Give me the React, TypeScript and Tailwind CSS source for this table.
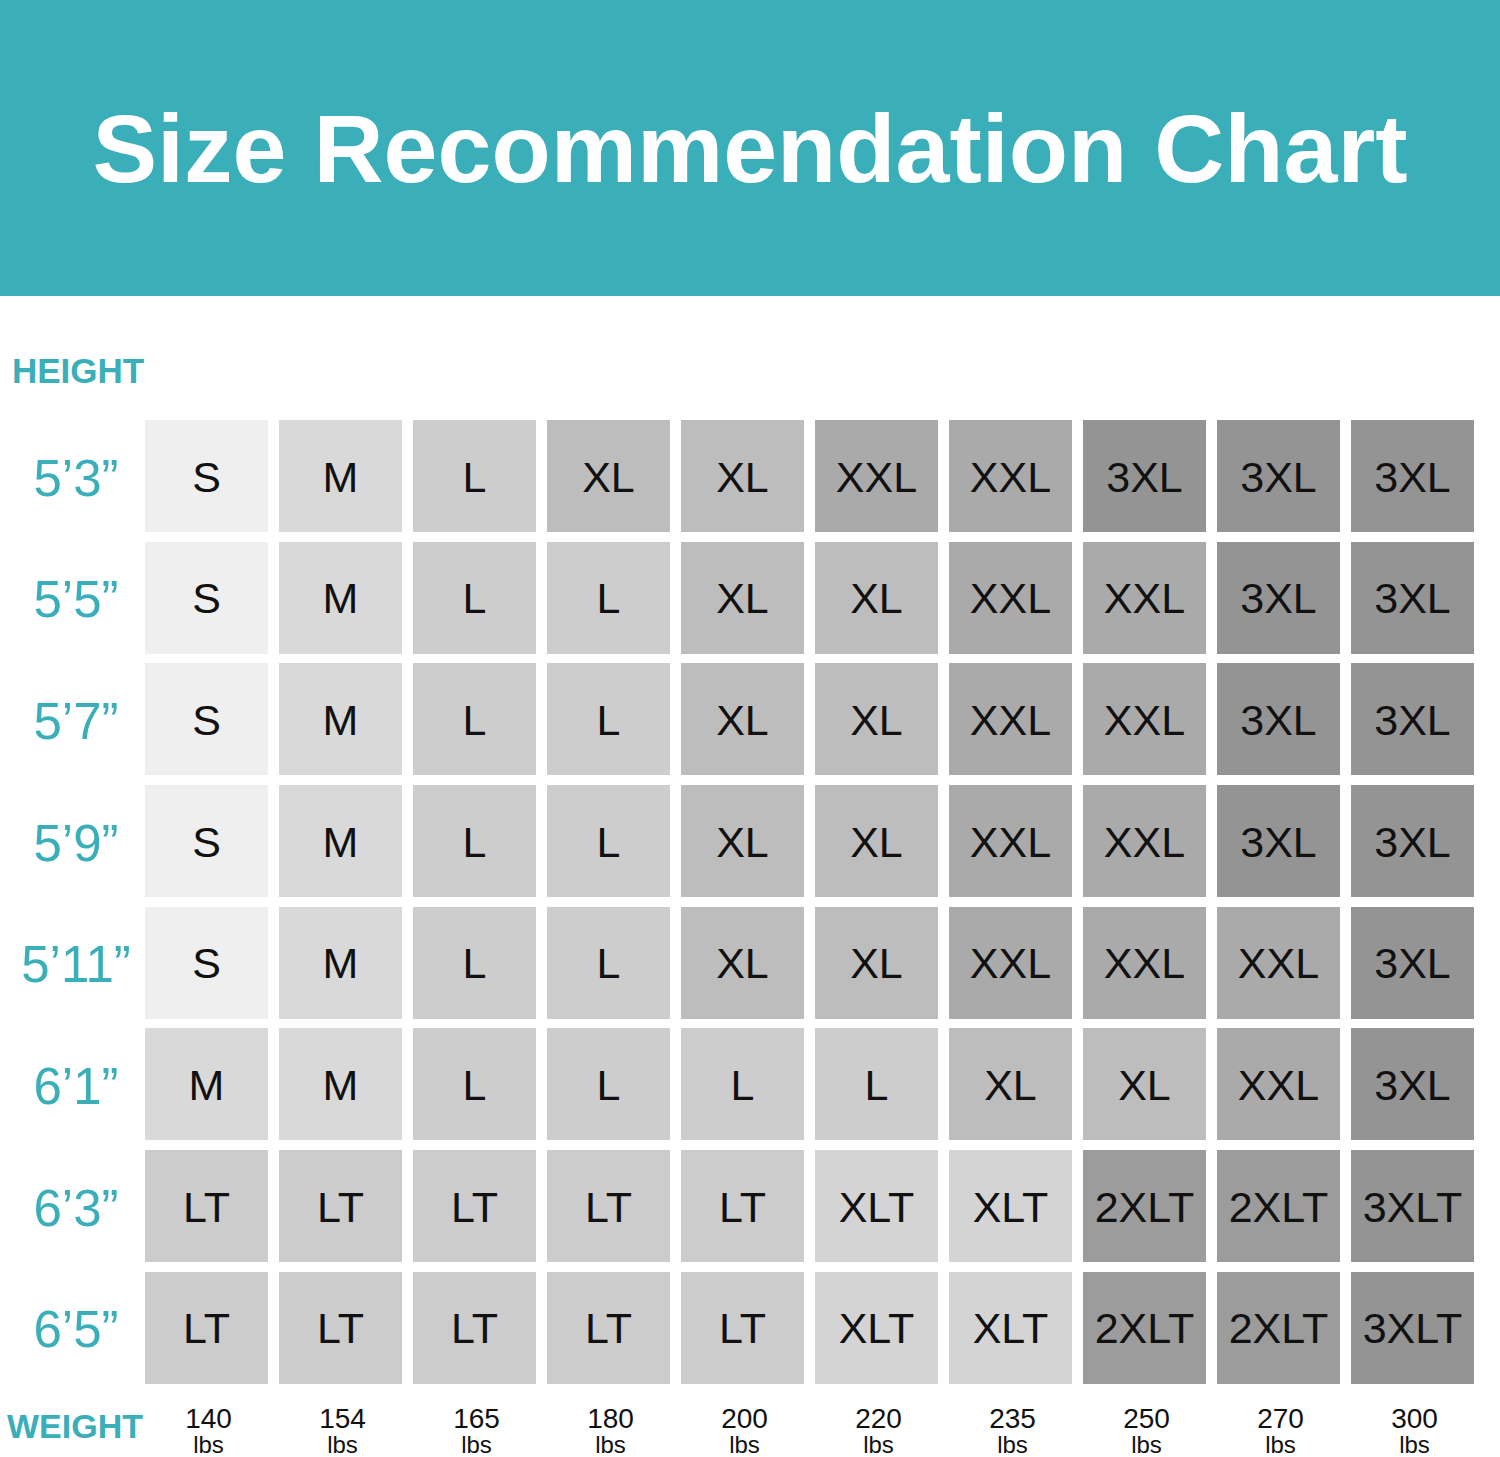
const sizeColors: Record<string, string> = {
  S: 'bg-[#efefef]',
  M: 'bg-[#d9d9d9]',
  L: 'bg-[#cdcdcd]',
  XL: 'bg-[#bdbdbd]',
  XXL: 'bg-[#aaaaaa]',
  '3XL': 'bg-[#949494]',
  LT: 'bg-[#cccccc]',
  XLT: 'bg-[#d4d4d4]',
  '2XLT': 'bg-[#9c9c9c]',
  '3XLT': 'bg-[#949494]',
};

const rows = [
  { height: '5’3”', sizes: ['S', 'M', 'L', 'XL', 'XL', 'XXL', 'XXL', '3XL', '3XL', '3XL'] },
  { height: '5’5”', sizes: ['S', 'M', 'L', 'L', 'XL', 'XL', 'XXL', 'XXL', '3XL', '3XL'] },
  { height: '5’7”', sizes: ['S', 'M', 'L', 'L', 'XL', 'XL', 'XXL', 'XXL', '3XL', '3XL'] },
  { height: '5’9”', sizes: ['S', 'M', 'L', 'L', 'XL', 'XL', 'XXL', 'XXL', '3XL', '3XL'] },
  { height: '5’11”', sizes: ['S', 'M', 'L', 'L', 'XL', 'XL', 'XXL', 'XXL', 'XXL', '3XL'] },
  { height: '6’1”', sizes: ['M', 'M', 'L', 'L', 'L', 'L', 'XL', 'XL', 'XXL', '3XL'] },
  { height: '6’3”', sizes: ['LT', 'LT', 'LT', 'LT', 'LT', 'XLT', 'XLT', '2XLT', '2XLT', '3XLT'] },
  { height: '6’5”', sizes: ['LT', 'LT', 'LT', 'LT', 'LT', 'XLT', 'XLT', '2XLT', '2XLT', '3XLT'] },
];

const weights = ['140', '154', '165', '180', '200', '220', '235', '250', '270', '300'];

export default function App() {
  return (
    <div className="w-[1500px] h-[1457px] bg-white font-['Liberation_Sans',Arial,sans-serif] text-[#111111]">
      <header className="flex h-[296px] items-center justify-center bg-[#3aaeb9]">
        <h1 className="text-[97px] font-bold leading-none text-white">Size Recommendation Chart</h1>
      </header>

      <div className="mt-[57px] pl-[12px] text-[35px] font-bold leading-none text-[#3aaeb9]">HEIGHT</div>

      <div className="mt-[32px] grid grid-cols-[134px_repeat(10,123px)] gap-x-[11px] gap-y-[9.7px]">
        {rows.map((row) => (
          <div key={row.height} className="contents">
            <div className="flex items-center justify-center pl-[18px] pt-[4px] text-[51px] leading-none text-[#3aaeb9] whitespace-nowrap">
              {row.height}
            </div>
            {row.sizes.map((size, i) => (
              <div
                key={i}
                className={`flex h-[112px] items-center justify-center pt-[2px] text-[43px] leading-none ${sizeColors[size]}`}
              >
                {size}
              </div>
            ))}
          </div>
        ))}
      </div>

      <div className="mt-[21px] grid grid-cols-[134px_repeat(10,123px)] gap-x-[11px]">
        <div className="pl-[7px] pt-[4px] text-[34px] font-bold leading-none text-[#3aaeb9] whitespace-nowrap">
          WEIGHT
        </div>
        {weights.map((w) => (
          <div key={w} className="flex flex-col items-center pl-[4px] leading-none">
            <span className="text-[28px]">{w}</span>
            <span className="text-[24px]">lbs</span>
          </div>
        ))}
      </div>
    </div>
  );
}
